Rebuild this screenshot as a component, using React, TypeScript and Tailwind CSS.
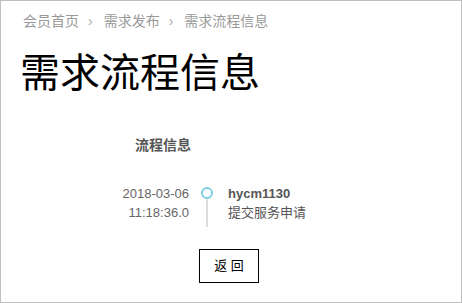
import React from "react";

// breadcrumb trail above the page title
const crumbs = ["会员首页", "需求发布", "需求流程信息"];

const steps = [
  { date: "2018-03-06", time: "11:18:36.0", user: "hycm1130", action: "提交服务申请" },
];

export default function App() {
  return (
    <div className="h-[303px] w-[462px] border border-[#c0c0c0] bg-white font-['Liberation_Sans','Noto_Sans_CJK_SC',sans-serif]">
      <nav className="flex items-center pl-[22px] pt-[10px] text-[14px] leading-[20px] text-[#999]">
        {crumbs.map((c, i) => (
          <React.Fragment key={c}>
            {i > 0 && <span className="ml-[9px] mr-[11px] text-[#aaa]">›</span>}
            <span>{c}</span>
          </React.Fragment>
        ))}
      </nav>

      <h1 className="mt-[18px] pl-[19px] text-[40px] font-normal leading-[48px] text-black">
        需求流程信息
      </h1>

      <div className="mt-[38px] pl-[134px] text-[14px] font-bold leading-[20px] text-[#555]">
        流程信息
      </div>

      <div className="mt-[29px]">
        {steps.map((s) => (
          <div key={s.date + s.time} className="flex text-[13px] leading-[19px]">
            <div className="w-[189px] pr-px text-right text-[#666]">
              <div>{s.date}</div>
              <div>{s.time}</div>
            </div>
            <div className="ml-[11px] flex w-[12px] flex-col items-center pt-[3px]">
              <span className="h-[12px] w-[12px] rounded-full border-2 border-[#7fd0e0] bg-white" />
              <span className="h-[28px] w-[2px] bg-[#ddd]" />
            </div>
            <div className="ml-[15px] text-[#555]">
              <div className="font-bold">{s.user}</div>
              <div>{s.action}</div>
            </div>
          </div>
        ))}
      </div>

      <button className="ml-[198px] mt-[22px] h-[34px] w-[60px] border border-black bg-white text-[13px] text-black">
        返 回
      </button>
    </div>
  );
}
